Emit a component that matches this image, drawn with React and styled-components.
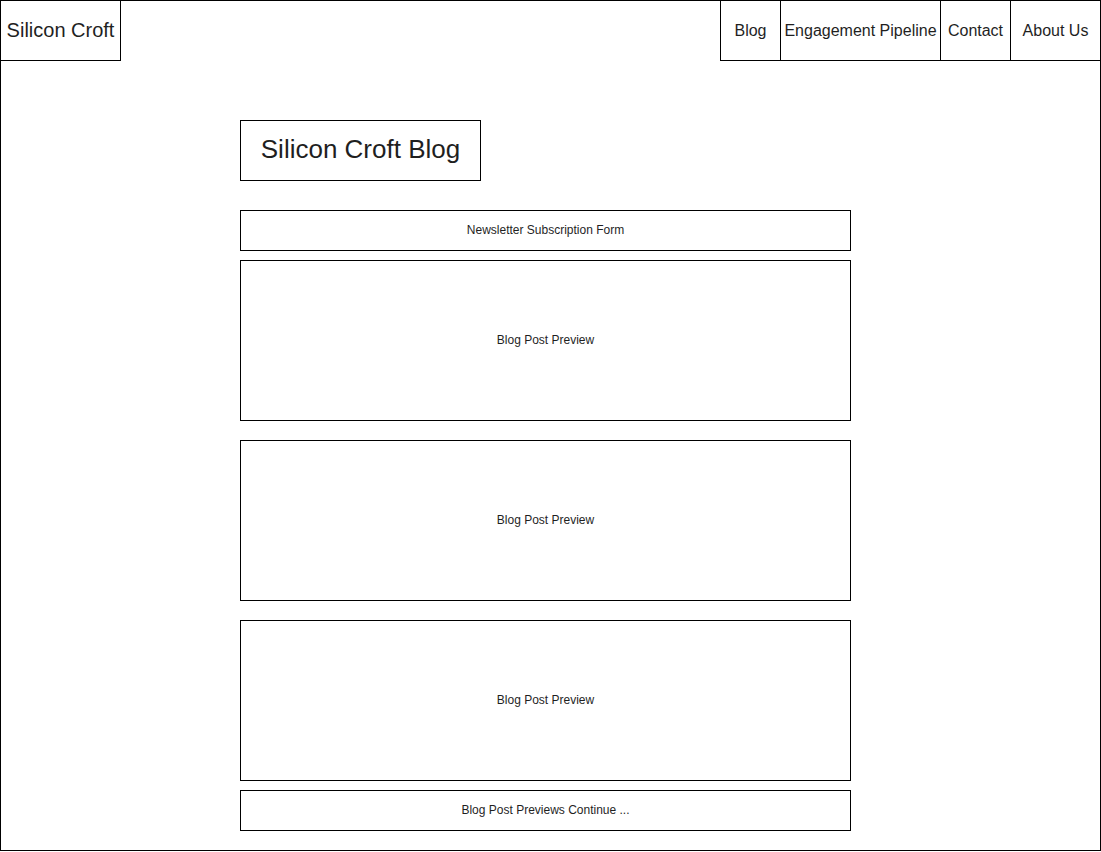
import React from "react";
import styled, { createGlobalStyle } from "styled-components";

const GlobalStyle = createGlobalStyle`
  html, body {
    margin: 0;
    padding: 0;
    background: #fff;
  }
  body {
    font-family: "Liberation Sans", Arial, Helvetica, sans-serif;
    color: #1f1f1f;
  }
  * {
    box-sizing: border-box;
  }
`;

const Frame = styled.div`
  width: 1101px;
  height: 851px;
  border: 1px solid #000;
  display: flex;
  flex-direction: column;
`;

const Header = styled.header`
  display: flex;
  justify-content: space-between;
  margin: -1px -1px 0 -1px;
  height: 61px;
`;

const Box = styled.div`
  border: 1px solid #000;
  display: flex;
  align-items: center;
  justify-content: center;
  text-align: center;
  white-space: nowrap;
`;

const Logo = styled(Box)`
  width: 121px;
  height: 61px;
  font-size: 20px;
`;

const Nav = styled.nav`
  display: flex;
`;

const NavItem = styled(Box)`
  width: ${(p) => p.$w}px;
  height: 61px;
  font-size: 16px;
  & + & {
    margin-left: -1px;
  }
`;

const Main = styled.main`
  display: flex;
  flex-direction: column;
  align-items: flex-start;
  padding-left: 239px;
  padding-top: 59px;
`;

const Title = styled(Box)`
  width: 241px;
  height: 61px;
  font-size: 26px;
  padding-bottom: 2px;
  margin-bottom: 29px;
`;

const Panel = styled(Box)`
  width: 611px;
  height: ${(p) => p.$h}px;
  margin-bottom: ${(p) => p.$gap}px;
  font-size: 12px;
  padding-bottom: 2px;
`;

const navItems = [
  { label: "Blog", w: 61 },
  { label: "Engagement Pipeline", w: 161 },
  { label: "Contact", w: 71 },
  { label: "About Us", w: 91 },
];

export default function App() {
  return (
    <>
      <GlobalStyle />
      <Frame>
        <Header>
          <Logo>Silicon Croft</Logo>
          <Nav>
            {navItems.map((n) => (
              <NavItem key={n.label} $w={n.w}>
                {n.label}
              </NavItem>
            ))}
          </Nav>
        </Header>
        <Main>
          <Title>Silicon Croft Blog</Title>
          <Panel $h={41} $gap={9}>Newsletter Subscription Form</Panel>
          <Panel $h={161} $gap={19}>Blog Post Preview</Panel>
          <Panel $h={161} $gap={19}>Blog Post Preview</Panel>
          <Panel $h={161} $gap={9}>Blog Post Preview</Panel>
          <Panel $h={41} $gap={0}>Blog Post Previews Continue ...</Panel>
        </Main>
      </Frame>
    </>
  );
}
